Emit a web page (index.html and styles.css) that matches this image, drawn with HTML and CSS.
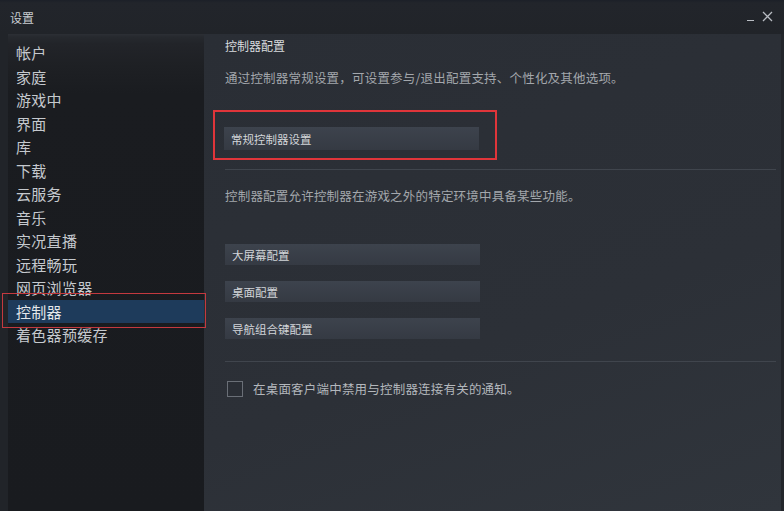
FILE: index.html
```html
<!DOCTYPE html>
<html lang="zh-CN">
<head>
    <meta charset="UTF-8">
    <meta name="viewport" content="width=device-width, initial-scale=1.0">
    <title>设置</title>
    <link rel="stylesheet" href="styles.css">
</head>
<body>

    <div class="titlebar">
        <div class="title">设置</div>
        <div class="window-buttons">
            <span class="win-min"></span>
            <svg class="win-close" width="11" height="11" viewBox="0 0 11 11">
                <path d="M1 1 L10 10 M10 1 L1 10" stroke="#b9bdc3" stroke-width="1.3" fill="none"/>
            </svg>
        </div>
    </div>

    <div class="main">
        <ul class="sidebar">
            <li>帐户</li>
            <li>家庭</li>
            <li>游戏中</li>
            <li>界面</li>
            <li>库</li>
            <li>下载</li>
            <li>云服务</li>
            <li>音乐</li>
            <li>实况直播</li>
            <li>远程畅玩</li>
            <li>网页浏览器</li>
            <li class="active">控制器</li>
            <li>着色器预缓存</li>
        </ul>

        <section class="panel">
            <h2>控制器配置</h2>
            <p class="desc">通过控制器常规设置，可设置参与/退出配置支持、个性化及其他选项。</p>

            <div class="highlight">
                <button type="button" class="btn btn-first">常规控制器设置</button>
            </div>

            <div class="divider"></div>

            <p class="desc desc-second">控制器配置允许控制器在游戏之外的特定环境中具备某些功能。</p>

            <div class="btn-list">
                <button type="button" class="btn">大屏幕配置</button>
                <button type="button" class="btn">桌面配置</button>
                <button type="button" class="btn">导航组合键配置</button>
            </div>

            <div class="divider divider-second"></div>

            <label class="check-row">
                <span class="checkbox"></span>
                <span>在桌面客户端中禁用与控制器连接有关的通知。</span>
            </label>
        </section>
        <div class="edge"></div>
    </div>

</body>
</html>
```

FILE: styles.css
```css
html, body {
    height: 100%;
}
body {
    font-family: 'Noto Sans CJK SC', 'Noto Sans', sans-serif;
    margin: 0;
    padding: 0;
    background-color: #212429;
    color: #c6cacf;
    overflow: hidden;
    display: flex;
    flex-direction: column;
}
.titlebar {
    height: 34px;
    flex: none;
    display: flex;
    justify-content: space-between;
    align-items: center;
    padding: 0 11px 0 10px;
    background: linear-gradient(to bottom, #1c2028 0, #22252b 3px, #212429 100%);
}
.title {
    font-size: 12px;
    color: #c8ccd1;
    margin-top: 1px;
}
.window-buttons {
    display: flex;
    align-items: flex-end;
    gap: 8px;
    margin-top: -2px;
}
.win-min {
    display: block;
    width: 7px;
    height: 1px;
    background-color: #b9bdc3;
    margin-bottom: 1px;
}
.main {
    flex: 1;
    display: flex;
    min-height: 0;
}
.sidebar {
    list-style: none;
    margin: 0 0 0 8px;
    padding: 7px 0 0 0;
    width: 196px;
    flex: none;
    background: linear-gradient(to bottom, #2c2f35 0, #26292e 3px, #222429 10px, #1e2024 32px, #1a1c20 60px, #191b1f 100%);
}
.sidebar li {
    font-size: 15px;
    line-height: 23.5px;
    height: 23.5px;
    padding-left: 8px;
    color: #c5c9ce;
    letter-spacing: 0.3px;
}
.sidebar li.active {
    position: relative;
    background-color: #1e3b5b;
    color: #e4e7ea;
}
.sidebar li.active::after {
    content: '';
    position: absolute;
    top: -7px;
    bottom: -5px;
    left: -6px;
    right: -2px;
    border: 1px solid #c4393f;
}
.panel {
    flex: 1;
    padding: 4px 5px 0 21px;
    background: linear-gradient(160deg, #2a2e35 0%, #2c3037 60%, #30353c 100%);
}
.edge {
    width: 3px;
    flex: none;
    background-color: #23262b;
}
.panel h2 {
    font-size: 12px;
    font-weight: normal;
    color: #d8dbde;
    line-height: 16px;
    margin: 0;
}
.desc {
    font-size: 12.5px;
    letter-spacing: 0.2px;
    line-height: 16px;
    color: #a3a7ac;
    margin: 16px 0 0 0;
}
.highlight {
    margin: 24px 0 0 -12px;
    width: max-content;
    padding: 15px 16px 8px 9px;
    border: 2px solid #e0353a;
}
.btn {
    display: block;
    width: 255px;
    height: 21px;
    padding: 0 0 0 7px;
    border: none;
    text-align: left;
    font-family: 'Noto Sans CJK SC', 'Noto Sans', sans-serif;
    font-size: 11.5px;
    color: #d2d5d9;
    background: linear-gradient(to bottom, #3d434d 0%, #353a43 100%);
    cursor: pointer;
}
.btn-first {
    height: 23px;
}
.divider {
    height: 1px;
    margin: 9px 0 0 0;
    background-color: #40454d;
}
.desc-second {
    margin-top: 18px;
}
.btn-list {
    display: flex;
    flex-direction: column;
    gap: 16px;
    margin-top: 40px;
}
.divider-second {
    margin-top: 22px;
}
.check-row {
    display: flex;
    align-items: center;
    gap: 10px;
    margin: 17px 0 0 2px;
    font-size: 12.5px;
    letter-spacing: 0.2px;
    color: #b3b7bc;
}
.checkbox {
    display: block;
    width: 14px;
    height: 14px;
    border: 1px solid #6a6f77;
    background-color: #2a2e35;
}
```
